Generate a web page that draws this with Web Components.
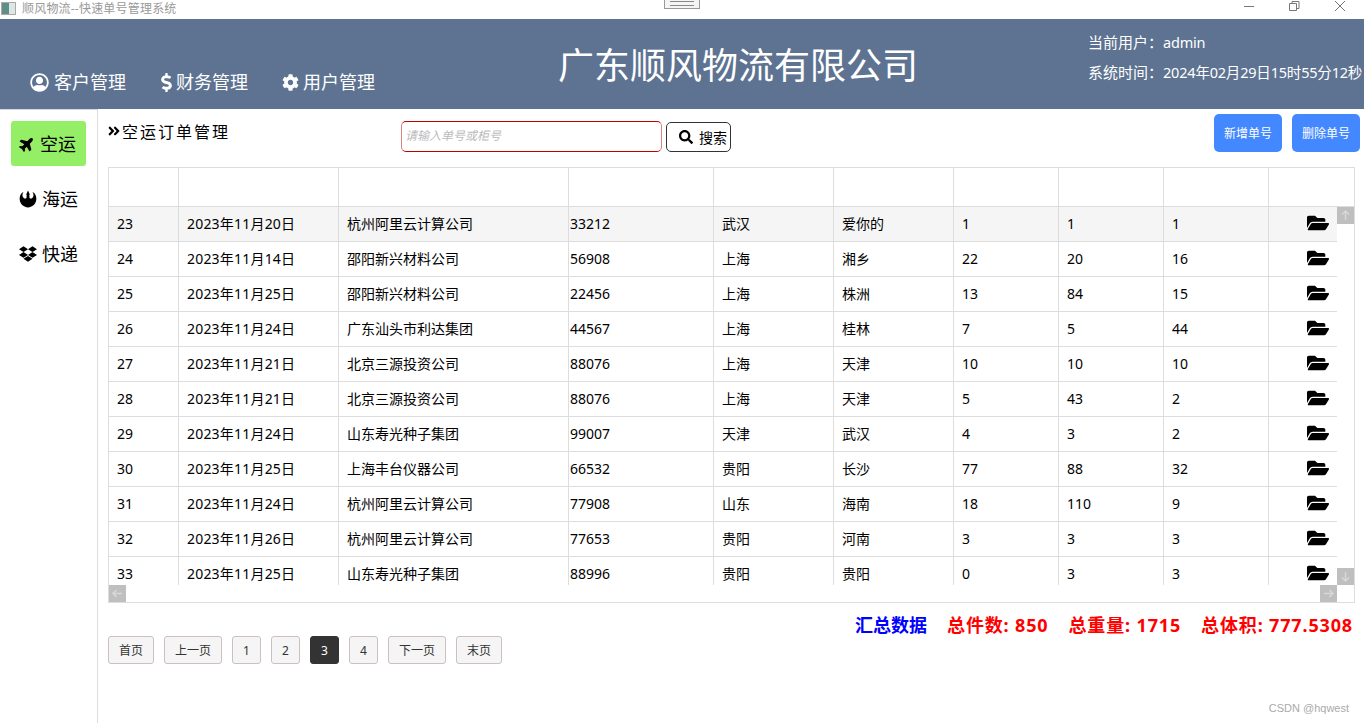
<!DOCTYPE html>
<html lang="zh">
<head>
<meta charset="utf-8">
<title>顺风物流--快速单号管理系统</title>
<style>
  html, body { margin: 0; height: 723px; overflow: hidden; background: #fff; }
  body { font-family: "Noto Sans", "Noto Sans CJK SC", sans-serif; color: #000; }
</style>
</head>
<body>
<app-shell></app-shell>
<script>
const icons = {
  plane: ['0 0 576 512', 'M480 192H365.71L260.61 8.06A16.014 16.014 0 0 0 246.71 0h-65.5c-10.63 0-18.3 10.17-15.38 20.39L214.86 192H112l-43.2-57.6c-3.02-4.03-7.77-6.4-12.8-6.4H16.01C5.6 128-2.04 137.78.49 147.88L32 256 .49 364.12C-2.04 374.22 5.6 384 16.01 384H56c5.04 0 9.78-2.37 12.8-6.4L112 320h102.86l-49.03 171.6c-2.92 10.22 4.75 20.4 15.38 20.4h65.5c5.74 0 11.04-3.08 13.89-8.06L365.71 320H480c35.35 0 96-28.65 96-64s-60.65-64-96-64z'],
  search: ['0 0 512 512', 'M505 442.7L405.3 343c-4.5-4.5-10.6-7-17-7H372c27.6-35.3 44-79.7 44-128C416 93.1 322.9 0 208 0S0 93.1 0 208s93.1 208 208 208c48.3 0 92.7-16.4 128-44v16.3c0 6.4 2.5 12.5 7 17l99.7 99.7c9.4 9.4 24.6 9.4 33.9 0l28.3-28.3c9.4-9.4 9.4-24.6.1-34zM208 336c-70.7 0-128-57.2-128-128 0-70.7 57.2-128 128-128 70.7 0 128 57.2 128 128 0 70.7-57.2 128-128 128z'],
  cog: ['0 0 512 512', 'M487.4 315.7l-42.6-24.6c4.3-23.2 4.3-47 0-70.2l42.6-24.6c4.9-2.8 7.1-8.6 5.5-14-11.1-35.6-30-67.8-54.7-94.6-3.8-4.1-10-5.1-14.8-2.3L380.8 110c-17.9-15.4-38.5-27.3-60.8-35.1V25.8c0-5.6-3.9-10.5-9.4-11.7-36.7-8.2-74.3-7.8-109.2 0-5.5 1.2-9.4 6.1-9.4 11.7V75c-22.2 7.9-42.8 19.8-60.8 35.1L88.7 85.5c-4.9-2.8-11-1.9-14.8 2.3-24.7 26.7-43.6 58.9-54.7 94.6-1.7 5.4.6 11.2 5.5 14L67.3 221c-4.3 23.2-4.3 47 0 70.2l-42.6 24.6c-4.9 2.8-7.1 8.6-5.5 14 11.1 35.6 30 67.8 54.7 94.6 3.8 4.1 10 5.1 14.8 2.3l42.6-24.6c17.9 15.4 38.5 27.3 60.8 35.1v49.2c0 5.6 3.9 10.5 9.4 11.7 36.7 8.2 74.3 7.8 109.2 0 5.5-1.2 9.4-6.1 9.4-11.7v-49.2c22.2-7.9 42.8-19.8 60.8-35.1l42.6 24.6c4.9 2.8 11 1.9 14.8-2.3 24.7-26.7 43.6-58.9 54.7-94.6 1.5-5.5-.7-11.3-5.6-14.1zM256 336c-44.1 0-80-35.9-80-80s35.9-80 80-80 80 35.9 80 80-35.9 80-80 80z'],
  dollar: ['0 0 288 512', 'M209.2 233.4l-108-31.6C88.7 198.2 80 186.5 80 173.5c0-16.3 13.2-29.5 29.5-29.5h66.3c12.2 0 24.2 3.7 34.2 10.5 6.1 4.1 14.3 3.1 19.5-2l34.8-34c7.1-6.9 6.1-18.4-1.8-24.5C238 74.8 207.4 64.1 176 64V16c0-8.8-7.2-16-16-16h-32c-8.8 0-16 7.2-16 16v48h-2.5C45.8 64-5.4 118.7.5 183.6c4.2 46.1 39.4 83.6 83.8 96.6l102.5 30c12.5 3.7 21.2 15.3 21.2 28.3 0 16.3-13.2 29.5-29.5 29.5h-66.3C100 368 88 364.3 78 357.5c-6.1-4.1-14.3-3.1-19.5 2l-34.8 34c-7.1 6.9-6.1 18.4 1.8 24.5 24.5 19.2 55.1 29.9 86.5 30v48c0 8.8 7.2 16 16 16h32c8.8 0 16-7.2 16-16v-48.2c46.6-.9 90.3-28.6 105.7-72.7 21.5-61.6-14.6-124.8-72.5-141.7z'],
  user: ['0 0 512 512', 'M256 8C119 8 8 119 8 256s111 248 248 248 248-111 248-248S393 8 256 8zm0 48c110 0 200 90 200 200 0 43-14 83-37 116-25-32-62-52-105-52-10 0-26 10-58 10s-48-10-58-10c-43 0-80 20-105 52-23-33-37-73-37-116C56 146 146 56 256 56zm0 48c-53 0-96 43-96 96s43 96 96 96 96-43 96-96-43-96-96-96z'],
  rebel: ['0 0 512 512', 'M130 50C40 100 10 190 20 280C35 410 140 495 256 495C372 495 477 410 492 280C502 190 472 100 382 50C425 115 425 185 378 225C350 248 320 245 300 225L292 130L315 140L256 15L197 140L220 130L212 225C192 245 162 248 134 225C87 185 87 115 130 50Z'],
  dropbox: ['0 0 528 512', 'M264.4 116.3l-132 84.3 132 84.3-132 84.3L0 284.1l132.3-84.3L0 116.3 132.3 32l132.1 84.3zM131.6 395.7l132-84.3 132 84.3-132 84.3-132-84.3zm132.8-111.6l132-84.3-132-83.6L395.7 32 528 116.3l-132.3 84.3L528 284.8l-132.3 84.3-131.3-85z'],
  angles: ['0 0 448 512', 'M224.3 273l-136 136c-9.4 9.4-24.6 9.4-33.9 0l-22.6-22.6c-9.4-9.4-9.4-24.6 0-33.9l96.4-96.4-96.4-96.4c-9.4-9.4-9.4-24.6 0-33.9L54.3 103c9.4-9.4 24.6-9.4 33.9 0l136 136c9.5 9.4 9.5 24.6.1 34zm192-34l-136-136c-9.4-9.4-24.6-9.4-33.9 0l-22.6 22.6c-9.4 9.4-9.4 24.6 0 33.9l96.4 96.4-96.4 96.4c-9.4 9.4-9.4 24.6 0 33.9l22.6 22.6c9.4 9.4 24.6 9.4 33.9 0l136-136c9.4-9.2 9.4-24.4 0-33.8z'],
  folder: ['0 0 576 512', 'M572.694 292.093L500.27 416.248A63.997 63.997 0 0 1 444.989 448H45.025c-18.523 0-30.064-20.093-20.731-36.093l72.424-124.155A64 64 0 0 1 152 256h399.964c18.523 0 30.064 20.093 20.73 36.093zM152 224h328v-48c0-26.51-21.49-48-48-48H272l-64-64H48C21.49 64 0 85.49 0 112v278.046l69.077-118.418C86.214 242.25 118.179 224 152 224z']
}

class FaIcon extends HTMLElement {
  connectedCallback() {
    const [box, d] = icons[this.getAttribute('name')]
    const size = this.getAttribute('size') || 16
    const width = this.getAttribute('width') || size
    const rotate = this.getAttribute('rotate') || 0
    this.attachShadow({ mode: 'open' }).innerHTML = `
      <style>
        :host { display: inline-flex; align-items: center; justify-content: center; flex: none; }
        svg { display: block; width: ${width}px; height: ${size}px; fill: currentColor; transform: rotate(${rotate}deg); }
      </style>
      <svg viewBox="${box}"><path d="${d}"/></svg>`
  }
}
customElements.define('fa-icon', FaIcon)

class WinTitlebar extends HTMLElement {
  constructor() {
    super()
    this.attachShadow({ mode: 'open' }).innerHTML = `
      <style>
        :host { display: flex; align-items: center; height: 19px; background: #fff; position: relative; color: #999; font-size: 12px; }
        #logo { width: 15px; height: 13px; margin: -3px 6px 0 1px; border: 1px solid #aaa; box-sizing: border-box; background: linear-gradient(90deg, #5f8f86 0 55%, #dfe6e6 55%); }
        #title { line-height: 16px; margin-top: -1px; letter-spacing: .2px; }
        #grip { position: absolute; left: 664px; top: 0; width: 36px; height: 9px; box-sizing: border-box; border: 1px solid #999; border-top: 0; background: #f4f4f4; }
        #grip::after { content: ''; position: absolute; left: 5px; right: 5px; top: 1px; height: 3px; border-top: 1px solid #888; border-bottom: 1px solid #888; }
        #controls { margin-left: auto; display: flex; height: 19px; }
        svg { display: block; width: 46px; height: 13px; fill: none; stroke: #777; stroke-width: 1; }
      </style>
      <div id="logo"></div>
      <div id="title">顺风物流--快速单号管理系统</div>
      <div id="grip"></div>
      <div id="controls">
        <svg viewBox="0 0 46 13"><path d="M18 6.500h10"/></svg>
        <svg viewBox="0 0 46 13"><path d="M17.500 3.500h7v7h-7zM20 3.500V1.500h7v7h-2.500"/></svg>
        <svg viewBox="0 0 46 13"><path d="M17 1l10 10M27 1L17 11"/></svg>
      </div>`
  }
}
customElements.define('win-titlebar', WinTitlebar)

class AppHeader extends HTMLElement {
  constructor() {
    super()
    this.attachShadow({ mode: 'open' }).innerHTML = `
      <style>
        :host { display: grid; grid-template-columns: 558px 360px 1fr; height: 90px; background: #5d7391; color: #fff; }
        nav { display: flex; gap: 35px; padding: 51px 0 0 30px; font-size: 18px; line-height: 24px; height: 24px; }
        nav div { display: flex; align-items: center; gap: 5px; }
        nav div:nth-child(2) { gap: 4px; }
        nav div:last-child { margin-left: -1px; gap: 4px; }
        h1 { margin: 0; font-weight: 400; font-size: 36px; line-height: 50px; padding-top: 22px; text-align: center; white-space: nowrap; }
        #info { justify-self: end; width: 276px; padding-top: 12px; font-size: 15px; line-height: 22px; }
        #info div { display: flex; margin-bottom: 8px; white-space: nowrap; }
        #info span:first-child { width: 75px; }
        #info span:last-child { font-size: 14.5px; letter-spacing: -.2px; }
      </style>
      <nav>
        <div><fa-icon name="user" size="19"></fa-icon>客户管理</div>
        <div><fa-icon name="dollar" size="19" width="11"></fa-icon>财务管理</div>
        <div><fa-icon name="cog" size="17"></fa-icon>用户管理</div>
      </nav>
      <h1>广东顺风物流有限公司</h1>
      <div id="info">
        <div><span>当前用户：</span><span>admin</span></div>
        <div><span>系统时间：</span><span>2024年02月29日15时55分12秒</span></div>
      </div>`
  }
}
customElements.define('app-header', AppHeader)

class SideNav extends HTMLElement {
  constructor() {
    super()
    this.attachShadow({ mode: 'open' }).innerHTML = `
      <style>
        :host { display: flex; flex-direction: column; gap: 10px; width: 98px; box-sizing: border-box; padding: 11px 11px 0; border-top: 1px solid #d6d6ea; border-right: 1px solid #ddd; flex: none; }
        div { display: flex; align-items: center; gap: 5px; width: 75px; height: 45px; padding-left: 8px; box-sizing: border-box; border-radius: 3px; font-size: 18px; line-height: 24px; }
        .active { background: #94ee66; }
      </style>
      <div class="active"><fa-icon name="plane" size="16" rotate="-45"></fa-icon>空运</div>
      <div><fa-icon name="rebel" size="18"></fa-icon>海运</div>
      <div><fa-icon name="dropbox" size="18"></fa-icon>快递</div>`
  }
}
customElements.define('side-nav', SideNav)

class OrderToolbar extends HTMLElement {
  constructor() {
    super()
    this.attachShadow({ mode: 'open' }).innerHTML = `
      <style>
        :host { display: flex; height: 58px; box-sizing: border-box; padding-top: 5px; }
        #crumb { display: flex; align-items: center; gap: 1px; width: 294px; height: 34px; font-size: 16px; letter-spacing: 2px; margin-left: -1px; box-sizing: border-box; }
        #input { width: 261px; height: 31px; margin-top: 7px; box-sizing: border-box; border: 1px solid #e08080; border-top-color: #c00000; border-bottom-color: #c00000; border-radius: 5px; padding-left: 3px; color: #bbb; font-size: 12px; font-style: italic; line-height: 28px; }
        #search { display: flex; align-items: center; gap: 6px; width: 65px; height: 30px; margin: 8px 0 0 4px; padding-left: 12px; box-sizing: border-box; border: 1px solid #333; border-radius: 5px; font-size: 14px; }
        #actions { margin-left: auto; display: flex; gap: 10px; padding-right: 4px; }
        #actions div { width: 68px; height: 38px; display: flex; align-items: center; justify-content: center; background: #4488ff; color: #fff; border-radius: 5px; font-size: 12px; }
      </style>
      <div id="crumb"><fa-icon name="angles" size="14"></fa-icon>空运订单管理</div>
      <div id="input">请输入单号或柜号</div>
      <div id="search"><fa-icon name="search" size="14"></fa-icon>搜索</div>
      <div id="actions"><div>新增单号</div><div>删除单号</div></div>`
  }
}
customElements.define('order-toolbar', OrderToolbar)

const orders = [
  [23, '2023年11月20日', '杭州阿里云计算公司', '33212', '武汉', '爱你的', 1, 1, 1],
  [24, '2023年11月14日', '邵阳新兴材料公司', '56908', '上海', '湘乡', 22, 20, 16],
  [25, '2023年11月25日', '邵阳新兴材料公司', '22456', '上海', '株洲', 13, 84, 15],
  [26, '2023年11月24日', '广东汕头市利达集团', '44567', '上海', '桂林', 7, 5, 44],
  [27, '2023年11月21日', '北京三源投资公司', '88076', '上海', '天津', 10, 10, 10],
  [28, '2023年11月21日', '北京三源投资公司', '88076', '上海', '天津', 5, 43, 2],
  [29, '2023年11月24日', '山东寿光种子集团', '99007', '天津', '武汉', 4, 3, 2],
  [30, '2023年11月25日', '上海丰台仪器公司', '66532', '贵阳', '长沙', 77, 88, 32],
  [31, '2023年11月24日', '杭州阿里云计算公司', '77908', '山东', '海南', 18, 110, 9],
  [32, '2023年11月26日', '杭州阿里云计算公司', '77653', '贵阳', '河南', 3, 3, 3],
  [33, '2023年11月25日', '山东寿光种子集团', '88996', '贵阳', '贵阳', 0, 3, 3]
]
const widths = [70, 160, 230, 145, 120, 120, 105, 105, 105]

class OrderTable extends HTMLElement {
  constructor() {
    super()
    const cols = widths.map(w => `<col style="width:${w}px">`).join('')
    const rows = orders.map((r, i) => `
      <tr class="${i === 0 ? 'hover' : ''}">
        ${r.map((c, j) => `<td class="c${j}">${c}</td>`).join('')}
        <td class="open"><fa-icon name="folder" size="22"></fa-icon></td>
      </tr>`).join('')
    const arrow = d => `<svg viewBox="0 0 17 17"><path d="${d}"/></svg>`
    this.attachShadow({ mode: 'open' }).innerHTML = `
      <style>
        :host { display: grid; grid-template-columns: 1228px 17px; grid-template-rows: 39px 378px 17px; width: 1247px; box-sizing: border-box; border: 1px solid #ddd; font-size: 14px; }
        table { table-layout: fixed; border-collapse: separate; border-spacing: 0; width: 1228px; }
        #head { grid-column: 1 / 3; display: flex; border-bottom: 1px solid #ddd; }
        #head div { box-sizing: border-box; border-right: 1px solid #ddd; height: 38px; }
        #head div:last-child { border: 0; flex: 1; }
        #body { overflow: hidden; }
        td { height: 34px; padding: 0 8px; box-sizing: content-box; border-right: 1px solid #ddd; border-bottom: 1px solid #ddd; line-height: 20px; white-space: nowrap; overflow: hidden; color: #000; }
        td.c1 { letter-spacing: .2px; }
        td.c3 { padding: 0 1px; }
        td.open { border-right: 0; padding: 0 8px 2px 0; text-align: right; vertical-align: middle; height: 32px; }
        td.open fa-icon { display: flex; justify-content: flex-end; }
        tr.hover td { background: #f5f5f5; }
        #vbar, #hbar { display: flex; justify-content: space-between; }
        #vbar { flex-direction: column; }
        svg { display: block; width: 17px; height: 17px; background: #bfbfbf; fill: none; stroke: #d8d8d8; stroke-width: 1.500; }
      </style>
      <div id="head">${widths.map(w => `<div style="width:${w}px"></div>`).join('')}<div></div></div>
      <div id="body"><table><colgroup>${cols}<col></colgroup>${rows}</table></div>
      <div id="vbar">${arrow('M8.500 13V4M5 7.500l3.500-3.500L12 7.500')}${arrow('M8.500 4v9M5 9.500l3.500 3.500L12 9.500')}</div>
      <div id="hbar">${arrow('M13 8.500H4M7.500 5L4 8.500 7.500 12')}${arrow('M4 8.500h9M9.500 5l3.500 3.500L9.500 12')}</div>`
  }
}
customElements.define('order-table', OrderTable)

class SummaryBar extends HTMLElement {
  constructor() {
    super()
    this.attachShadow({ mode: 'open' }).innerHTML = `
      <style>
        :host { display: flex; justify-content: flex-end; gap: 20px; height: 33px; box-sizing: border-box; padding: 8px 11px 0 0; align-items: center; font-size: 18px; font-weight: 700; color: #f00; white-space: nowrap; }
        span { letter-spacing: .85px; }
        .blue { color: #00f; letter-spacing: 0; }
      </style>
      <span class="blue">汇总数据</span>
      <span>总件数: 850</span>
      <span>总重量: 1715</span>
      <span>总体积: 777.5308</span>`
  }
}
customElements.define('summary-bar', SummaryBar)

class PagerBar extends HTMLElement {
  constructor() {
    super()
    const pages = ['首页', '上一页', '1', '2', '3', '4', '下一页', '末页']
    this.attachShadow({ mode: 'open' }).innerHTML = `
      <style>
        :host { display: flex; gap: 10px; }
        div { height: 28px; padding: 0 10px; box-sizing: border-box; display: flex; align-items: center; justify-content: center; background: #f5f5f5; border: 1px solid #ccbfbf; border-radius: 3px; font-size: 12px; color: #333; }
        .num { width: 29px; padding: 0; }
        .on { background: #333; color: #fff; border-color: #333; }
      </style>
      ${pages.map(p => `<div class="${/\d/.test(p) ? 'num' : ''} ${p === '3' ? 'on' : ''}">${p}</div>`).join('')}`
  }
}
customElements.define('pager-bar', PagerBar)

class AppShell extends HTMLElement {
  constructor() {
    super()
    this.attachShadow({ mode: 'open' }).innerHTML = `
      <style>
        :host { display: flex; flex-direction: column; height: 723px; position: relative; }
        #body { display: flex; flex: 1; min-height: 0; }
        main { flex: 1; min-width: 0; padding-left: 10px; }
        #mark { position: absolute; right: 15px; bottom: 8px; font: 11px/14px "Liberation Sans", sans-serif; color: #aaa; }
      </style>
      <win-titlebar></win-titlebar>
      <app-header></app-header>
      <div id="body">
        <side-nav></side-nav>
        <main>
          <order-toolbar></order-toolbar>
          <order-table></order-table>
          <summary-bar></summary-bar>
          <pager-bar></pager-bar>
        </main>
      </div>
      <div id="mark">CSDN @hqwest</div>`
  }
}
customElements.define('app-shell', AppShell)
</script>
</body>
</html>
